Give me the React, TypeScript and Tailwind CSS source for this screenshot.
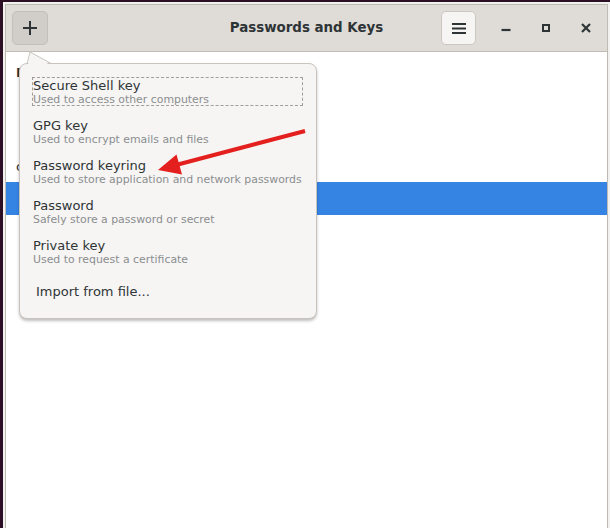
import React from "react";

const items = [
  { t: "Secure Shell key", s: "Used to access other computers" },
  { t: "GPG key", s: "Used to encrypt emails and files" },
  { t: "Password keyring", s: "Used to store application and network passwords" },
  { t: "Password", s: "Safely store a password or secret" },
  { t: "Private key", s: "Used to request a certificate" },
];

export default function App() {
  const font = { fontFamily: '"DejaVu Sans", "Liberation Sans", sans-serif' };
  return (
    <div className="relative w-[610px] h-[528px] overflow-hidden bg-[#2c0e25]" style={font}>
      <div className="ml-[3px] mt-[2px] h-[540px] bg-[#f2f1f0] pl-[2px] pt-[2px] pr-[2px]">
        <div className="w-[603px] h-[530px] border border-b-0 border-[#bfbab4] bg-white flex flex-col">
          {/* header */}
          <div className="h-[47px] bg-[#dfdcd8] border-b border-[#c0bbb5] grid grid-cols-[1fr_auto_1fr] items-center px-[6px]">
            <div className="flex items-center">
              <div className="w-[36px] h-[34px] rounded-[5px] bg-[#d1cdc8] border border-[#c4bfb9] flex items-center justify-center">
                <svg width="16" height="16" viewBox="0 0 16 16">
                  <path d="M8 1v14M1 8h14" stroke="#2e3436" strokeWidth="2" />
                </svg>
              </div>
            </div>
            <div className="text-[13.4px] font-bold text-[#2e3436] leading-none">Passwords and Keys</div>
            <div className="flex items-center justify-end pr-[1px] mr-[-6px]">
              <div className="w-[35px] h-[34px] rounded-[5px] bg-[#f6f5f4] border border-[#cdc7c2] flex items-center justify-center">
                <svg width="14" height="12" viewBox="0 0 14 12">
                  <path d="M0 2h14M0 6.5h14M0 11h14" stroke="#2e3436" strokeWidth="2" />
                </svg>
              </div>
              <div className="ml-[10px] w-[40px] h-[34px] flex items-center justify-center">
                <svg width="10" height="10" viewBox="0 0 10 10">
                  <path d="M0.5 7h9" stroke="#2e3436" strokeWidth="2.2" />
                </svg>
              </div>
              <div className="w-[40px] h-[34px] flex items-center justify-center">
                <svg width="8" height="8" viewBox="0 0 8 8">
                  <rect x="1" y="1" width="6" height="6" fill="none" stroke="#2e3436" strokeWidth="2" />
                </svg>
              </div>
              <div className="w-[40px] h-[34px] flex items-center justify-center">
                <svg width="10" height="10" viewBox="0 0 10 10">
                  <path d="M1 1l8 8M9 1l-8 8" stroke="#2e3436" strokeWidth="2.2" />
                </svg>
              </div>
            </div>
          </div>
          {/* body */}
          <div className="flex flex-col">
            <div className="pl-[10px] pt-[13px] h-[100px] text-[13px] leading-[15px] font-bold text-[#2e3436]">P</div>
            <div className="pl-[10px] pt-[7px] h-[30px] text-[13px] leading-[15px] text-[#2e3436]">c</div>
            <div className="h-[33px] bg-[#3584e4]" />
          </div>
        </div>
      </div>

      {/* popover */}
      <svg className="absolute left-0 top-0" width="610" height="528">
        <polygon points="27,64 30,52 52,64" fill="#f6f5f4" stroke="#c9c4be" strokeWidth="1" />
      </svg>
      <div className="absolute left-[19px] top-[63px] w-[298px] h-[256px] rounded-[8px] bg-[#f6f5f4] border border-[#c9c4be] shadow-[0_2px_3px_rgba(0,0,0,0.25)] pl-[12px] pr-[13px] pt-[13px]">
        <div className="flex flex-col gap-[11px]">
          {items.map((it, i) => (
            <div
              key={it.t}
              className={
                i === 0
                  ? "h-[29px] border border-dashed border-[#a19d98]"
                  : "h-[29px] border border-transparent"
              }
            >
              <div className="text-[13px] leading-[15px] text-[#2e3436] whitespace-nowrap">{it.t}</div>
              <div className="mt-[1px] text-[10.9px] leading-[12px] text-[#8b8e8f] whitespace-nowrap">{it.s}</div>
            </div>
          ))}
          <div className="pl-[4px] pt-[7px] text-[13px] leading-[15px] text-[#2e3436]">Import from file...</div>
        </div>
      </div>
      {/* cover the joint between popover and arrow */}
      <svg className="absolute left-0 top-0" width="610" height="528">
        <polygon points="28,65 30,54 50,65" fill="#f6f5f4" />
      </svg>

      {/* red annotation arrow */}
      <svg className="absolute left-0 top-0 pointer-events-none" width="610" height="528">
        <line x1="305" y1="131" x2="176" y2="165" stroke="#e4201e" strokeWidth="4" />
        <polygon points="158,170 176.5,154.5 182,174.5" fill="#e4201e" />
      </svg>
    </div>
  );
}
